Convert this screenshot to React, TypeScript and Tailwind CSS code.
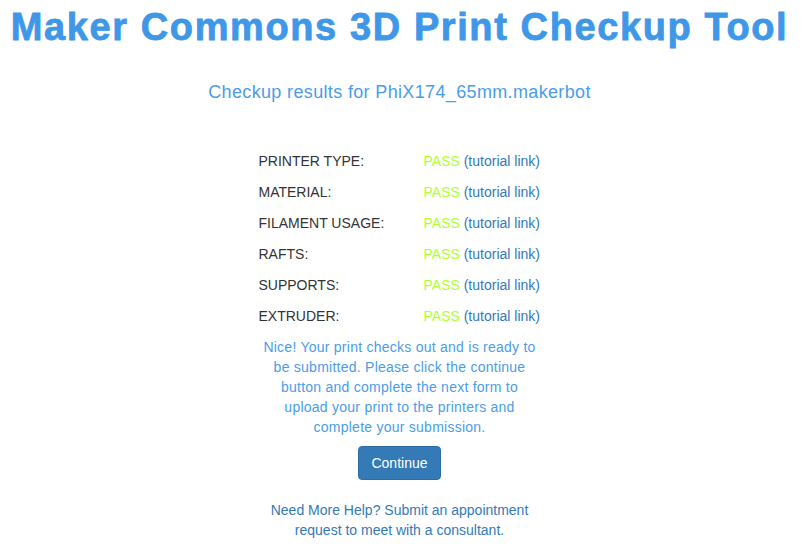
// Result page for the 3D print checkup: a list of passed checks, a note,
// a continue button and a help line.

const checks = [
  "PRINTER TYPE:",
  "MATERIAL:",
  "FILAMENT USAGE:",
  "RAFTS:",
  "SUPPORTS:",
  "EXTRUDER:",
];

export default function App() {
  return (
    <div className="min-h-[549px] w-[808px] bg-white font-['Liberation_Sans',Arial,sans-serif] text-[14px] text-[#333]">
      <div className="flex w-[799px] flex-col items-center">
        <h1 className="pt-[6px] text-[38px] leading-[42px] font-bold tracking-[1.6px] whitespace-nowrap text-[#3f97e8] [-webkit-text-stroke:0.8px_#3f97e8]">
          Maker Commons 3D Print Checkup Tool
        </h1>

        <h2 className="mt-[34px] text-[18px] leading-[20px] tracking-[0.35px] text-[#4a9de8]">
          Checkup results for PhiX174_65mm.makerbot
        </h2>

        <div className="mt-[43px] flex w-[282px] flex-col pr-[2px]">
          {checks.map((label) => (
            <div key={label} className="flex h-[31px] items-center leading-[20px]">
              <span className="w-[165px] shrink-0">{label}</span>
              <span className="whitespace-nowrap">
                <span className="text-[#adff2f]">PASS</span>{" "}
                <a className="text-[#337ab7]">(tutorial link)</a>
              </span>
            </div>
          ))}
        </div>

        <p className="mt-[6px] w-[300px] text-center leading-[20px] tracking-[0.25px] text-[#4a9de8]">
          Nice! Your print checks out and is ready to
          <br />
          be submitted. Please click the continue
          <br />
          button and complete the next form to
          <br />
          upload your print to the printers and
          <br />
          complete your submission.
        </p>

        <button className="mt-[9px] rounded-[4px] border border-[#2e6da4] bg-[#337ab7] px-[12px] py-[6px] leading-[20px] text-white">
          Continue
        </button>

        <p className="mt-[20px] w-[300px] text-center leading-[20px] text-[#337ab7]">
          Need More Help? Submit an appointment
          <br />
          request to meet with a consultant.
        </p>
      </div>
    </div>
  );
}
